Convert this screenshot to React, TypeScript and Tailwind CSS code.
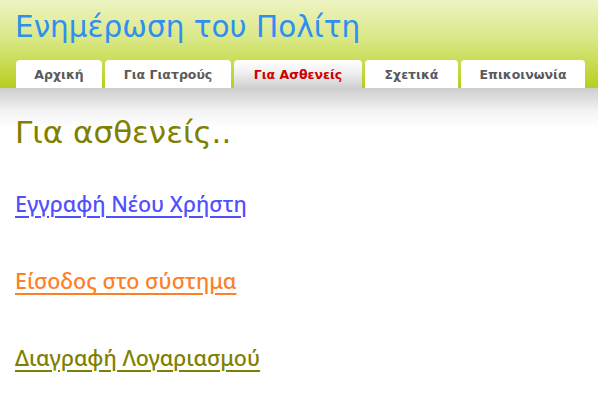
import React from "react";

const tabs = [
  { label: "Αρχική", w: "w-[86px]", active: false },
  { label: "Για Γιατρούς", w: "w-[126px]", active: false },
  { label: "Για Ασθενείς", w: "w-[128px]", active: true },
  { label: "Σχετικά", w: "w-[93px]", active: false },
  { label: "Επικοινωνία", w: "w-[124px]", active: false },
];

export default function App() {
  return (
    <div className="w-[598px] h-[408px] bg-white overflow-hidden font-['DejaVu_Sans',sans-serif]">
      <div className="h-[88px] bg-[linear-gradient(to_bottom,#eef4c2_0%,#d9e784_45%,#b8ce1e_100%)] flex flex-col">
        <div className="pl-[15px] pt-[7px] h-[60px] text-[29.5px] leading-[40px] text-[#2f8ff0] font-['DejaVu_Sans',sans-serif]">
          Ενημέρωση του Πολίτη
        </div>
        <div className="flex pl-[16px] gap-[3px] h-[28px]">
          {tabs.map((t) => (
            <div
              key={t.label}
              className={`${t.w} h-[28px] rounded-t-[4px] flex items-center justify-center pt-[2px] text-[12.5px] font-bold font-['DejaVu_Sans',sans-serif] ${
                t.active
                  ? "bg-[linear-gradient(to_bottom,#ffffff_0%,#f2f2f2_40%,#d0d0d0_100%)] text-[#cc0000]"
                  : "bg-white text-[#5a5a5a]"
              }`}
            >
              {t.label}
            </div>
          ))}
        </div>
      </div>
      <div className="bg-[linear-gradient(to_bottom,#cdcdcd_0%,#f4f4f4_60%,#ffffff_100%)] h-[40px]" />
      <div className="px-[15px]">
        <h1 className="-mt-[15px] text-[31px] leading-[38px] text-[#808000] font-['DejaVu_Sans',sans-serif]">Για ασθενείς..</h1>
        <div className="mt-[42px] flex flex-col gap-[55px] font-['Noto_Sans',sans-serif] font-medium">
          <a href="#" className="text-[21.5px] leading-[22px] text-[#5050ff] underline decoration-[1.5px] underline-offset-[4px]">Εγγραφή Νέου Χρήστη</a>
          <a href="#" className="text-[21.5px] leading-[22px] text-[#ff7f27] underline decoration-[1.5px] underline-offset-[4px]">Είσοδος στο σύστημα</a>
          <a href="#" className="text-[21.5px] leading-[22px] text-[#808000] underline decoration-[1.5px] underline-offset-[4px]">Διαγραφή Λογαριασμού</a>
        </div>
      </div>
    </div>
  );
}
